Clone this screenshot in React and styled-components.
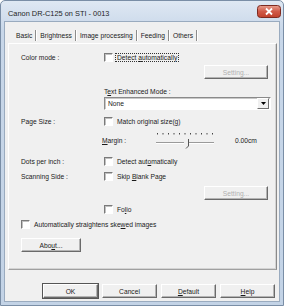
import React from 'react';
import styled, { createGlobalStyle } from 'styled-components';

const Global = createGlobalStyle`
  html, body { margin: 0; padding: 0; background: #fff; }
  body { font-family: "Liberation Sans", Arial, sans-serif; }
`;

const Window = styled.div`
  width: 284px;
  height: 306px;
  box-sizing: border-box;
  border: 1px solid #7a8ea6;
  border-radius: 5px 5px 0 0;
  background: linear-gradient(#dfe8f3, #c8d7e9 30px, #c3d3e6);
  display: flex;
  flex-direction: column;
  overflow: hidden;
`;

const TitleBar = styled.div`
  height: 20px;
  display: flex;
  align-items: flex-start;
  justify-content: space-between;
  padding: 0 2px 0 7px;
`;

const Title = styled.span`
  font-size: 7.4px;
  color: #1e1e1e;
  line-height: 10px;
  margin-top: 8px;
`;

const CloseBtn = styled.svg`
  width: 24px;
  height: 13px;
  margin-top: 4px;
  flex: none;
  display: block;
`;

const Body = styled.div`
  flex: 1;
  margin: 0 3px 3px;
  background: #f0f0f0;
  border: 1px solid #9aabbf;
  display: flex;
  flex-direction: column;
  padding: 5px 2px 0 3px;
`;

const TabStrip = styled.div`
  height: 16px;
  display: flex;
  align-items: center;
  padding-left: 8px;
`;

const Tab = styled.div`
  font-size: 6.7px;
  color: #1a1a1a;
  height: 11px;
  line-height: 11px;
  padding: 0 3px 0 ${p => (p.$first ? 0 : 4)}px;
  border-right: 1px solid #8c8c8c;
  box-shadow: 1px 0 0 #fff;
`;

const Panel = styled.div`
  border-top: 1px solid #fff;
  border-left: 1px solid #fff;
  border-right: 1px solid #8a8a8a;
  border-bottom: 1px solid #a0a0a0;
  box-shadow: inset -1px -1px 0 #d4d4d4;
  padding: 7px 8px 17px 12px;
  display: flex;
  flex-direction: column;
`;

const Row = styled.div`
  display: flex;
  align-items: center;
  height: ${p => p.$h || 12}px;
  margin-top: ${p => p.$mt || 0}px;
  padding-left: ${p => p.$indent || 0}px;
  justify-content: ${p => (p.$right ? 'flex-end' : 'flex-start')};
`;

const Label = styled.span`
  font-size: 6.7px;
  color: #1a1a1a;
  width: ${p => (p.$w ? p.$w + 'px' : 'auto')};
  flex: none;
  white-space: nowrap;
`;

const Box = styled.span`
  width: 7px;
  height: 7px;
  flex: none;
  background: #fff;
  border-top: 1px solid #7a7a7a;
  border-left: 1px solid #7a7a7a;
  border-bottom: 1px solid #fff;
  border-right: 1px solid #fff;
  box-shadow: inset 1px 1px 0 #c0c0c0;
  margin-right: 4px;
`;

const Focus = styled.span`
  outline: 1px dotted #333;
  outline-offset: 0;
  padding: 0 1px;
  margin-left: -1px;
`;

const Btn = styled.div`
  width: ${p => p.$w || 55}px;
  height: 14px;
  box-sizing: border-box;
  background: #f0f0f0;
  border-top: 1px solid #fff;
  border-left: 1px solid #fff;
  border-right: 1px solid #6a6a6a;
  border-bottom: 1px solid #6a6a6a;
  box-shadow: inset -1px -1px 0 #b4b4b4;
  font-size: 6.7px;
  color: ${p => (p.$disabled ? '#b0b0b0' : '#1a1a1a')};
  display: flex;
  align-items: center;
  justify-content: center;
  ${p => p.$default && 'outline: 1px solid #555; outline-offset: 0;'}
`;

const Select = styled.div`
  height: 13px;
  box-sizing: border-box;
  width: 167px;
  margin-left: 83px;
  background: #fff;
  border-top: 1px solid #8a8a8a;
  border-left: 1px solid #8a8a8a;
  border-right: 1px solid #fff;
  border-bottom: 1px solid #fff;
  box-shadow: inset 1px 1px 0 #c8c8c8;
  display: flex;
  align-items: center;
  justify-content: space-between;
  font-size: 6.7px;
  color: #1a1a1a;
  padding-left: 3px;
`;

const Arrow = styled.div`
  width: 10px;
  height: 9px;
  margin-right: 1px;
  background: #f0f0f0;
  border-top: 1px solid #fff;
  border-left: 1px solid #fff;
  border-right: 1px solid #707070;
  border-bottom: 1px solid #707070;
  display: flex;
  align-items: center;
  justify-content: center;
`;

const SliderRow = styled.div`
  display: flex;
  align-items: center;
  height: 20px;
  margin-top: 3px;
  padding-left: 81px;
`;

const Value = styled.span`
  font-size: 6.7px;
  color: #1a1a1a;
  margin-left: 20px;
`;

const Footer = styled.div`
  display: flex;
  justify-content: flex-end;
  gap: 4px;
  margin-top: 14px;
  padding-right: 2px;
`;

const Check = ({ children, indent = 83, mt }) => (
  <Row $indent={indent} $mt={mt}>
    <Box />
    <Label>{children}</Label>
  </Row>
);

const Slider = () => (
  <svg width="60" height="20" viewBox="0 0 60 20">
    {Array.from({ length: 11 }).map((_, i) => (
      <rect key={i} x={2 + i * 5.5} y="3" width="1" height="1.5" fill="#444" />
    ))}
    <line x1="1" y1="12.5" x2="59" y2="12.5" stroke="#9a9a9a" />
    <line x1="1" y1="13.5" x2="59" y2="13.5" stroke="#fff" />
    <path d="M29 9 h5 v7 l-2.5 2.5 l-2.5 -2.5 z" fill="#f0f0f0" />
    <path d="M33.5 9 v7 l-2.5 2.5" fill="none" stroke="#555" />
  </svg>
);

export default function App() {
  return (
    <>
      <Global />
      <Window>
        <TitleBar>
          <Title>Canon DR-C125 on STI - 0013</Title>
          <CloseBtn viewBox="0 0 24 13">
            <defs>
              <linearGradient id="cg" x1="0" y1="0" x2="0" y2="1">
                <stop offset="0" stopColor="#e8a090" />
                <stop offset="0.5" stopColor="#d05a48" />
                <stop offset="1" stopColor="#c0402c" />
              </linearGradient>
            </defs>
            <rect x="0.5" y="0.5" width="23" height="12" rx="3" fill="url(#cg)" stroke="#7d2a20" />
            <path d="M9 3.5 L15 9.5 M15 3.5 L9 9.5" stroke="#fff" strokeWidth="1.8" />
          </CloseBtn>
        </TitleBar>
        <Body>
          <TabStrip>
            <Tab $first>Basic</Tab>
            <Tab>Brightness</Tab>
            <Tab>Image processing</Tab>
            <Tab>Feeding</Tab>
            <Tab>Others</Tab>
          </TabStrip>
          <Panel>
            <Row>
              <Label $w={83}>Color mode :</Label>
              <Box />
              <Label><Focus>Detect <u>a</u>utomatically</Focus></Label>
            </Row>
            <Row $h={14} $mt={2} $right>
              <Btn $w={64} $disabled>Setting...</Btn>
            </Row>
            <Row $mt={6} $indent={83}>
              <Label>T<u>e</u>xt Enhanced Mode :</Label>
            </Row>
            <Select>
              None
              <Arrow>
                <svg width="5" height="3" viewBox="0 0 5 3">
                  <path d="M0 0 H5 L2.5 3 Z" fill="#000" />
                </svg>
              </Arrow>
            </Select>
            <Row $mt={5}>
              <Label $w={83}>Page Size :</Label>
              <Box />
              <Label>Match original size(<u>g</u>)</Label>
            </Row>
            <SliderRow>
              <Label $w={53}><u>M</u>argin :</Label>
              <Slider />
              <Value>0.00cm</Value>
            </SliderRow>
            <Row $mt={5}>
              <Label $w={83}>Dots per inch :</Label>
              <Box />
              <Label>Detect aut<u>o</u>matically</Label>
            </Row>
            <Row $mt={3}>
              <Label $w={83}>Scanning Side :</Label>
              <Box />
              <Label>Skip <u>B</u>lank Page</Label>
            </Row>
            <Row $h={14} $mt={4} $right>
              <Btn $w={64} $disabled>Setting...</Btn>
            </Row>
            <Check mt={3}>Fo<u>l</u>io</Check>
            <Check indent={0} mt={3}>Automatically straightens ske<u>w</u>ed images</Check>
            <Row $h={14} $mt={8}>
              <Btn $w={60}>Abo<u>u</u>t...</Btn>
            </Row>
          </Panel>
          <Footer>
            <Btn $default>OK</Btn>
            <Btn>Cancel</Btn>
            <Btn><u>D</u>efault</Btn>
            <Btn><u>H</u>elp</Btn>
          </Footer>
        </Body>
      </Window>
    </>
  );
}
